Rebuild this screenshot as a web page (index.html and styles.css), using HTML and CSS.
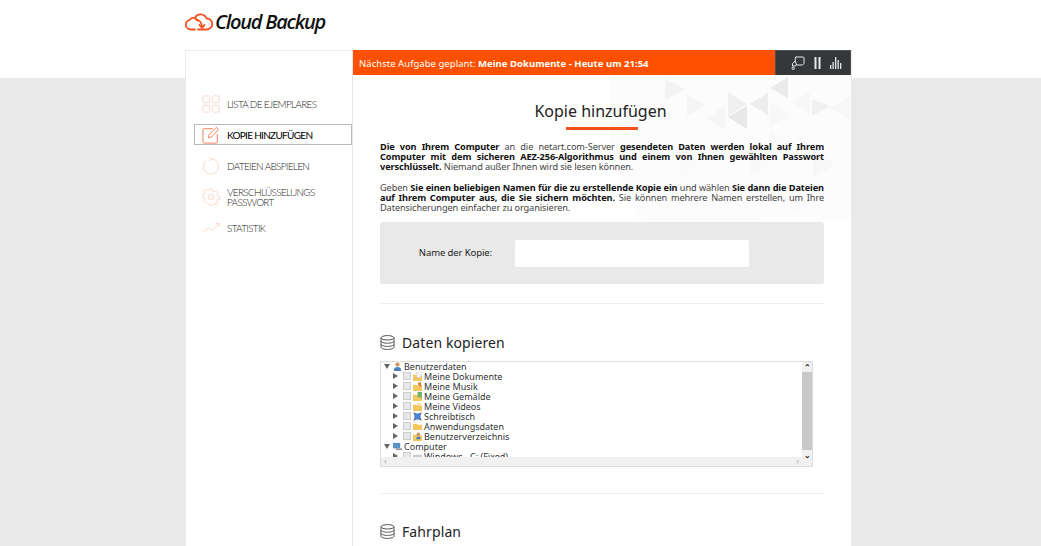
FILE: index.html
```html
<!DOCTYPE html>
<html lang="de">
<head>
<meta charset="utf-8">
<title>Cloud Backup</title>
<link rel="stylesheet" href="styles.css">
</head>
<body>
<header class="top">
  <div class="logo">
    <svg class="logo-icon" width="28" height="20" viewBox="0 0 28 20" fill="none" stroke="#f4511e" stroke-width="1.800" stroke-linejoin="round" stroke-linecap="round">
      <path d="M10 7A6.200 6.200 0 0 1 21.500 7.500A5.300 5.300 0 0 1 22 18.500H13"/>
      <path d="M12.500 9.500A4.500 4.500 0 0 0 4.800 8.800A4.900 4.900 0 0 0 6 18.500H10"/>
      <path d="M11 8.500C14.500 9 17 12 17 16"/>
      <path d="M14.500 14 17 16.800 19.500 14"/>
    </svg>
    <span class="logo-text">Cloud Backup</span>
  </div>
</header>
<div class="card">
  <nav class="side">
    <a class="item">
      <svg class="ic dim" viewBox="0 0 20 20"><rect x="1" y="1" width="7.500" height="7.500" rx="1"/><rect x="11.500" y="1" width="7.500" height="7.500" rx="1"/><rect x="1" y="11.500" width="7.500" height="7.500" rx="1"/><rect x="11.500" y="11.500" width="7.500" height="7.500" rx="1"/></svg>
      <span>LISTA DE EJEMPLARES</span>
    </a>
    <a class="item active">
      <svg class="ic" viewBox="0 0 20 20"><path d="M12 3H2.500A1.500 1.500 0 0 0 1 4.500V17.500A1.500 1.500 0 0 0 2.500 19H15.500A1.500 1.500 0 0 0 17 17.500V9"/><path d="M7 13l.8-3.500L16 1.500l2.500 2.500L10.500 12.200z"/></svg>
      <span>KOPIE HINZUFÜGEN</span>
    </a>
    <a class="item">
      <svg class="ic dim" viewBox="0 0 20 20"><path d="M5 3.600A8.500 8.500 0 1 0 10 2"/><path d="M7.500 0 10.500 2 8 4.500"/></svg>
      <span>DATEIEN ABSPIELEN</span>
    </a>
    <a class="item">
      <svg class="ic dim" viewBox="0 0 20 20"><circle cx="10" cy="10" r="3.200"/><path d="M8.500 1h3l.5 2.500 1.800.8L16 3l2 2.200-1.300 2 .7 1.800 2.100.6v3l-2.100.6-.7 1.800 1.300 2-2 2.200-2.200-1.300-1.800.8-.5 1.300h-3l-.5-1.500-1.800-.8L3.800 17l-2-2.200 1.300-2-.7-1.800L.5 10.400v-3l1.900-.4.7-1.800-1.300-2L3.800 1.500 6 2.800l2-.8z" transform="translate(0 .2) scale(1 .97)"/></svg>
      <span>VERSCHLÜSSELUNGS<br>PASSWORT</span>
    </a>
    <a class="item">
      <svg class="ic dim" viewBox="0 0 20 20"><path d="M1 14.500 7 10l4 3 8-7.500"/><path d="M15 5h4v3.500"/></svg>
      <span>STATISTIK</span>
    </a>
  </nav>
  <main class="main">
    <svg class="pattern" width="499" height="170" viewBox="353 75 499 170">
      <path d="M610 75H851V220H760L730 235 640 220 610 150z" fill="#fcfcfc"/>
      <path d="M770 88 788 77V98z" fill="#ebebeb"/>
      <path d="M750 104 768 93V115z" fill="#ededed"/>
      <path d="M728 117 747 106V129z" fill="#e8e8e8"/>
      <path d="M728 92 747 104 728 116z" fill="#f0f0f0"/>
      <path d="M812 99 830 106 812 116z" fill="#f0f0f0"/>
      <path d="M665 79 685 89 665 100z" fill="#f3f3f3"/>
      <path d="M687 94 705 105 687 116z" fill="#f5f5f5"/>
      <path d="M707 118 725 106V130z" fill="#f6f6f6"/>
      <path d="M792 102 810 92V114z" fill="#f7f7f7"/>
      <path d="M770 103 790 115 770 127z" fill="#f8f8f8"/>
      <path d="M830 108 851 96V120z" fill="#f8f8f8"/>
      <path d="M770 130 790 142 770 154z" fill="#f9f9f9"/>
      <path d="M813 150 835 165 813 178z" fill="#f8f8f8"/>
      <path d="M680 150 700 165 680 178z" fill="#fafafa"/>
      <path d="M750 150 770 165 750 178z" fill="#f9f9f9"/>
      <path d="M728 178 750 190 728 205z" fill="#fafafa"/>
      <path d="M790 190 812 205 790 215z" fill="#fafafa"/>
    </svg>
    <div class="status">
      <div class="status-text">Nächste Aufgabe geplant: <b>Meine Dokumente - Heute um 21:54</b></div>
      <div class="status-tools">
        <svg width="14" height="14" viewBox="0 0 14 14" fill="none" stroke="#e8e8e8" stroke-width="1"><path d="M4.500 1H12.500L13 1.500V7.500L11.500 9H5.500L4.200 5z"/><path d="M4.200 5 1.500 7.500V10H4L5.500 9"/><circle cx="2.200" cy="12.300" r="1.200"/></svg>
        <svg width="7" height="12" viewBox="0 0 7 12" fill="#e8e8e8"><rect x="0.500" width="2" height="12"/><rect x="4.500" width="2" height="12"/></svg>
        <svg width="12" height="12" viewBox="0 0 12 12" fill="#e8e8e8"><rect x="0" y="8" width="1.300" height="4"/><rect x="2.500" y="5" width="1.300" height="7"/><rect x="5" y="0" width="1.300" height="12"/><rect x="7.500" y="3" width="1.300" height="9"/><rect x="10" y="6" width="1.300" height="6"/></svg>
      </div>
    </div>
    <div class="content">
      <h1 class="title">Kopie hinzufügen</h1>
      <div class="underline"></div>
      <p class="para"><b>Die von Ihrem Computer</b> an die netart.com-Server <b>gesendeten Daten werden lokal auf Ihrem Computer mit dem sicheren AEZ-256-Algorithmus und einem von Ihnen gewählten Passwort verschlüsselt.</b> Niemand außer Ihnen wird sie lesen können.</p>
      <p class="para">Geben <b>Sie einen beliebigen Namen für die zu erstellende Kopie ein</b> und wählen <b>Sie dann die Dateien auf Ihrem Computer aus, die Sie sichern möchten.</b> Sie können mehrere Namen erstellen, um Ihre Datensicherungen einfacher zu organisieren.</p>
      <form class="name-box">
        <label class="name-label" for="n">Name der Kopie:</label>
        <input class="name-input" id="n" type="text">
      </form>
      <hr class="rule first">
      <h2 class="sec">
        <svg class="db" width="15" height="15" viewBox="0 0 15 15"><ellipse cx="7.500" cy="2.800" rx="6.500" ry="2.200"/><path d="M1 2.800v9.400c0 1.200 2.900 2.200 6.500 2.200s6.500-1 6.500-2.200V2.800M1 6c0 1.200 2.900 2.200 6.500 2.200S14 7.200 14 6M1 9.200c0 1.200 2.900 2.200 6.500 2.200s6.500-1 6.500-2.200"/></svg>
        Daten kopieren
      </h2>
      <div class="tree">
        <div class="tree-view">
          <div class="row"><i class="arr down"></i><svg class="fi" viewBox="0 0 10 10"><circle cx="5" cy="2.800" r="2.300" fill="#c9915c"/><path d="M1 10c0-3.500 1.500-4.500 4-4.500S9 6.500 9 10z" fill="#4a7fc0"/></svg><span>Benutzerdaten</span></div>
          <div class="row sub"><i class="arr"></i><i class="chk"></i><svg class="fi" viewBox="0 0 10 10"><path d="M0 3h4l1 1h5v6H0z" fill="#f3c65e"/><path d="M4 0h5v6H4z" fill="#f4f4f4" stroke="#bbb" stroke-width=".5"/></svg><span>Meine Dokumente</span></div>
          <div class="row sub"><i class="arr"></i><i class="chk"></i><svg class="fi" viewBox="0 0 10 10"><path d="M0 3h4l1 1h5v6H0z" fill="#f3c65e"/><path d="M5 1l4-1v5H7z" fill="#d9822b"/></svg><span>Meine Musik</span></div>
          <div class="row sub"><i class="arr"></i><i class="chk"></i><svg class="fi" viewBox="0 0 10 10"><path d="M0 3h4l1 1h5v6H0z" fill="#f3c65e"/><path d="M5 0h5v6H5z" fill="#78b26a"/></svg><span>Meine Gemälde</span></div>
          <div class="row sub"><i class="arr"></i><i class="chk"></i><svg class="fi" viewBox="0 0 10 10"><path d="M0 3h4l1 1h5v6H0z" fill="#f3c65e"/><path d="M4 1h5v3H4z" fill="#f6e2b0"/></svg><span>Meine Videos</span></div>
          <div class="row sub"><i class="arr"></i><i class="chk"></i><svg class="fi" viewBox="0 0 10 10"><rect x="1.500" y="1.500" width="7" height="7" fill="#4a86d8"/><path d="M0 0l3 2-1 1zM10 0 7 2l1 1zM0 10l3-2-1-1zM10 10 7 8l1-1z" fill="#333"/></svg><span>Schreibtisch</span></div>
          <div class="row sub"><i class="arr"></i><i class="chk"></i><svg class="fi" viewBox="0 0 10 10"><path d="M0 2h4l1 1h5v6H0z" fill="#f3c65e"/></svg><span>Anwendungsdaten</span></div>
          <div class="row sub"><i class="arr"></i><i class="chk"></i><svg class="fi" viewBox="0 0 10 10"><path d="M0 3h4l1 1h5v6H0z" fill="#f3c65e"/><circle cx="6" cy="2.500" r="2" fill="#c9915c"/><path d="M3.500 8c0-2 1-3 2.500-3s2.500 1 2.500 3z" fill="#4a7fc0"/></svg><span>Benutzerverzeichnis</span></div>
          <div class="row"><i class="arr down"></i><svg class="fi" viewBox="0 0 10 10"><rect x="0" y="1" width="8" height="6" fill="#5b93c9"/><rect x="3" y="7" width="7" height="2" fill="#999"/></svg><span>Computer</span></div>
          <div class="row sub"><i class="arr"></i><i class="chk"></i><svg class="fi" viewBox="0 0 10 10"><rect x="0" y="3" width="10" height="5" fill="#ccc"/></svg><span>Windows - C: (Fixed)</span></div>
        </div>
        <div class="vbar"><span class="up">&#8963;</span><div class="vthumb"></div><span class="dn">&#8964;</span></div>
        <div class="hbar"><span class="l">&#8249;</span><span class="r">&#8250;</span></div>
      </div>
      <hr class="rule second-rule">
      <h2 class="sec">
        <svg class="db" width="15" height="15" viewBox="0 0 15 15"><ellipse cx="7.500" cy="2.800" rx="6.500" ry="2.200"/><path d="M1 2.800v9.400c0 1.200 2.900 2.200 6.500 2.200s6.500-1 6.500-2.200V2.800M1 6c0 1.200 2.900 2.200 6.500 2.200S14 7.200 14 6M1 9.200c0 1.200 2.900 2.200 6.500 2.200s6.500-1 6.500-2.200"/></svg>
        Fahrplan
      </h2>
    </div>
  </main>
</div>
</body>
</html>
```
FILE: styles.css
```css
* { box-sizing: border-box; }
html, body { margin: 0; height: 546px; overflow: hidden; }
body { background: #e9e9e9; font-family: "Noto Sans", "Open Sans", sans-serif; color: #222; }
.top { background: #fff; height: 78px; padding: 9px 0 0 185px; }
.logo { display: flex; align-items: center; height: 24px; gap: 2px; }
.logo-icon { flex: none; }
.logo-text { font-family: "Open Sans", sans-serif; font-size: 20px; font-weight: 600; font-style: italic; letter-spacing: -1.250px; color: #111; }
.card { display: flex; width: 667px; height: 520px; margin: -28px 0 0 185px; background: #fff; border: 1px solid #ececec; border-bottom: 0; }
.side { width: 167px; flex: none; padding-top: 42px; border-right: 1px solid #e6e6e6; }
.item { display: flex; align-items: center; gap: 7px; height: 21px; margin: 0 0 10px 8px; padding-left: 8px; font-family: Lato, sans-serif; font-size: 10px; font-weight: 300; letter-spacing: -.7px; color: #222; }
.item span { line-height: 10px; }
.item.active { border: 1px solid #b9b9b9; padding-left: 7px; color: #000; font-weight: 400; }
.ic { width: 18px; height: 18px; flex: none; fill: none; stroke: #f4815a; stroke-width: 1.100; }
.ic.dim { stroke: #fcd7c8; }
.main { position: relative; flex: 1; min-width: 0; margin-top: -1px; }
.pattern { position: absolute; left: 0; top: 25px; }
.status { position: relative; display: flex; height: 25px; background: #ff5000; color: #fff; font-size: 9.500px; }
.status-text { flex: 1; padding-left: 6px; line-height: 27px; letter-spacing: .04px; }
.status-tools { display: flex; align-items: center; justify-content: flex-end; gap: 9px; width: 76px; padding-right: 8px; background: #34383b; border: 1px solid #4c4f52; border-bottom: 0; }
.content { position: relative; padding: 0 27px; }
.title { margin: 0; padding: 26px 3px 0 0; font-size: 16px; line-height: 20px; font-weight: 400; text-align: center; color: #222; }
.underline { width: 72px; height: 3px; margin: 6px auto 0; background: #f4511e; }
.para { margin: 11px 0 0; padding-top: 1px; font-size: 9.200px; line-height: 10px; letter-spacing: -.1px; color: #444; text-align: justify; }
.para + .para { margin-top: 10px; }
.para b { color: #111; font-weight: 700; }
.name-box { display: flex; align-items: center; height: 62px; margin-top: 9px; background: #e9e9e9; border-radius: 3px; }
.name-label { width: 135px; padding: 0 23px 2px 0; font-size: 9.500px; letter-spacing: -.1px; text-align: right; }
.name-input { width: 234px; height: 27px; background: #fff; border: 0; border-radius: 2px; }
.rule { height: 1px; margin: 0; border: 0; background: #efefef; }
.rule.first { margin-top: 19px; }
.sec { display: flex; align-items: center; gap: 7px; height: 20px; margin: 28px 0 0; font-size: 14px; font-weight: 400; color: #222; letter-spacing: .1px; }
.second-rule + .sec { margin-top: 27px; }
.db { fill: none; stroke: #555; stroke-width: 1; }
.tree { position: relative; width: 433px; height: 106px; margin-top: 9px; border: 1px solid #ddd; background: #fff; overflow: hidden; font-size: 9px; }
.tree-view { margin-top: -1px; padding-left: 3px; height: 96px; overflow: hidden; }
.row { display: flex; align-items: center; height: 10px; gap: 2px; color: #333; white-space: nowrap; }
.row.sub { padding-left: 9px; }
.arr { flex: none; width: 0; height: 0; margin-right: 1px; border-left: 5px solid #666; border-top: 3px solid transparent; border-bottom: 3px solid transparent; }
.arr.down { border-left: 3px solid transparent; border-right: 3px solid transparent; border-top: 5px solid #666; border-bottom: 0; margin-right: 1px; }
.chk { flex: none; width: 8px; height: 8px; margin-left: 2px; border: 1px solid #ccc; background: #e8e8e8; }
.fi { flex: none; width: 9px; height: 9px; }
.vbar { position: absolute; right: 0; top: 0; bottom: 0; width: 10px; background: #f1f1f1; display: flex; flex-direction: column; align-items: center; font-size: 8px; line-height: 10px; color: #333; }
.vthumb { width: 10px; height: 78px; background: #c8c8c8; }
.up, .dn { height: 10px; font-weight: 700; }
.hbar { position: absolute; left: 0; right: 10px; bottom: 0; height: 9px; background: #f1f1f1; display: flex; justify-content: space-between; padding: 0 3px; font-size: 9px; line-height: 8px; color: #aaa; }
.rule.second-rule { margin-top: 26px; }
```
